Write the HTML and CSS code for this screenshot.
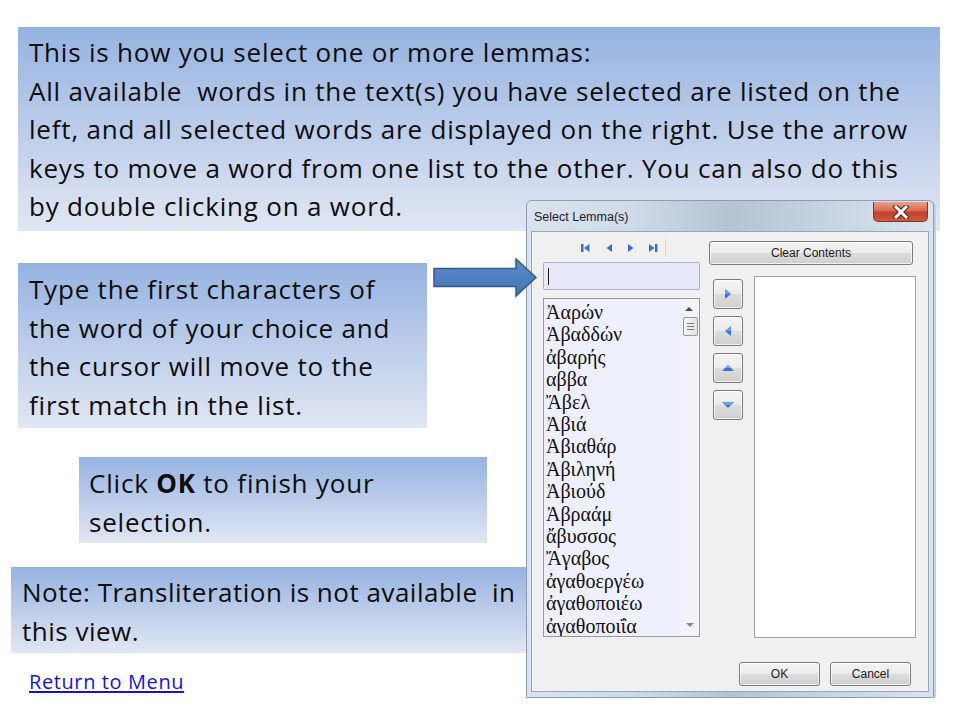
FILE: index.html
```html
<!DOCTYPE html>
<html>
<head>
<meta charset="utf-8">
<title>Select Lemma(s)</title>
<link rel="stylesheet" href="styles.css">
</head>
<body>
<div class="slide">
  <div class="box box-intro">
    This is how you select one or more lemmas:<br>
    All available&nbsp; words in the text(s) you have selected are listed on the<br>
    left, and all selected words are displayed on the right. Use the arrow<br>
    keys to move a word from one list to the other. You can also do this<br>
    by double clicking on a word.
  </div>

  <div class="row-type">
    <div class="box box-type">
      Type the first characters of<br>
      the word of your choice and<br>
      the cursor will move to the<br>
      first match in the list.
    </div>
    <svg class="pointer" width="106" height="42" viewBox="0 0 106 42">
      <defs>
        <linearGradient id="ag" x1="0" y1="0" x2="0" y2="1">
          <stop offset="0" stop-color="#5a8ccb"/>
          <stop offset="1" stop-color="#4474b3"/>
        </linearGradient>
      </defs>
      <path d="M1 10.5 H83 V1 L103 19.5 L83 38 V28.5 H1 Z" fill="url(#ag)" stroke="#36598a" stroke-width="1.5" stroke-linejoin="miter"/>
    </svg>
  </div>

  <div class="box box-ok">
    Click <b>OK</b> to finish your<br>
    selection.
  </div>

  <div class="box box-note">
    Note: Transliteration is not available&nbsp; in<br>
    this view.
  </div>

  <a class="menu-link" href="#">Return to Menu</a>

  <div class="dialog">
    <div class="titlebar">
      <span class="title">Select Lemma(s)</span>
      <div class="close">
        <svg width="20" height="14" viewBox="0 0 20 14">
          <path d="M5 2 L15 12 M15 2 L5 12" stroke="#5a2418" stroke-width="5" stroke-linecap="square"/>
          <path d="M5 2 L15 12 M15 2 L5 12" stroke="#ffffff" stroke-width="3" stroke-linecap="square"/>
        </svg>
      </div>
    </div>
    <div class="panel">
      <div class="panel-main">
        <div class="left-col">
          <div class="navbar">
            <svg width="90" height="20" viewBox="0 0 90 20">
              <g fill="#3c6fd6">
                <rect x="2" y="6" width="2.5" height="8"/>
                <polygon points="10.5,6 5,10 10.5,14"/>
                <polygon points="33,6 27.5,10 33,14"/>
                <polygon points="49,6 54.5,10 49,14"/>
                <polygon points="70,6 75.5,10 70,14"/>
                <rect x="76" y="6" width="2.5" height="8"/>
              </g>
              <line x1="86.5" y1="1" x2="86.5" y2="19" stroke="#d4d4d4" stroke-width="1"/>
            </svg>
          </div>
          <div class="search"><span class="caret"></span></div>
          <div class="listbox">
            <ul class="items">
              <li>Ἀαρών</li>
              <li>Ἀβαδδών</li>
              <li>ἀβαρής</li>
              <li>αββα</li>
              <li>Ἄβελ</li>
              <li>Ἀβιά</li>
              <li>Ἀβιαθάρ</li>
              <li>Ἀβιληνή</li>
              <li>Ἀβιούδ</li>
              <li>Ἀβραάμ</li>
              <li>ἄβυσσος</li>
              <li>Ἄγαβος</li>
              <li>ἀγαθοεργέω</li>
              <li>ἀγαθοποιέω</li>
              <li>ἀγαθοποιΐα</li>
            </ul>
            <div class="scrollbar">
              <svg class="sb-up" width="8" height="5" viewBox="0 0 8 5"><polygon points="0,5 4,1 8,5" fill="#4a4a4a"/></svg>
              <div class="thumb"><span></span><span></span><span></span></div>
              <div class="sb-space"></div>
              <svg class="sb-down" width="8" height="5" viewBox="0 0 8 5"><polygon points="0,0 4,4 8,0" fill="#8a8a8a"/></svg>
            </div>
          </div>
        </div>
        <div class="right-col">
          <div class="btn btn-clear">Clear Contents</div>
          <div class="right-row">
            <div class="move-btns">
              <div class="btn btn-sq">
                <svg width="8" height="10" viewBox="0 0 8 10"><polygon points="1,0 7,5 1,10" fill="#3f72d8"/><polygon points="1,0 7,5 1,5" fill="#6f9cf0"/></svg>
              </div>
              <div class="btn btn-sq">
                <svg width="8" height="10" viewBox="0 0 8 10"><polygon points="7,0 1,5 7,10" fill="#3f72d8"/><polygon points="7,0 1,5 7,5" fill="#6f9cf0"/></svg>
              </div>
              <div class="btn btn-sq">
                <svg width="12" height="7" viewBox="0 0 12 7"><polygon points="0,6 6,0 12,6" fill="#3f72d8"/><polygon points="3,3 6,0 9,3" fill="#7ba6f2"/></svg>
              </div>
              <div class="btn btn-sq">
                <svg width="12" height="7" viewBox="0 0 12 7"><polygon points="0,0 6,6 12,0" fill="#3f72d8"/><polygon points="0,0 12,0 9,3 3,3" fill="#6f9cf0"/></svg>
              </div>
            </div>
            <div class="selected-list"></div>
          </div>
        </div>
      </div>
      <div class="panel-footer">
        <div class="btn btn-foot">OK</div>
        <div class="btn btn-foot">Cancel</div>
      </div>
    </div>
  </div>
</div>
</body>
</html>
```

FILE: styles.css
```css
html, body {
  margin: 0;
  padding: 0;
  background: #ffffff;
}

.slide {
  position: relative;
  width: 960px;
  height: 720px;
  overflow: hidden;
  display: flex;
  flex-direction: column;
  align-items: flex-start;
  font-family: "Open Sans", Lato, sans-serif;
  color: #0d0d0d;
}

.box {
  box-sizing: border-box;
  background: linear-gradient(180deg, #95b3e1 0%, #bccdea 50%, #e1e7f3 100%);
  font-size: 26px;
  letter-spacing: 0.8px;
  line-height: 38.5px;
  padding: 6px 4px 0 11px;
  white-space: nowrap;
}

.box-intro {
  margin: 27px 0 0 18px;
  width: 922px;
  height: 204px;
}

.row-type {
  display: flex;
  align-items: flex-start;
  margin: 27px 0 0 18px;
  gap: 6px;
}

.box-type {
  margin-top: 5px;
  width: 409px;
  height: 165px;
  padding-top: 7px;
}

.pointer {
  position: relative;
  z-index: 3;
  display: block;
}

.box-ok {
  margin: 29px 0 0 79px;
  width: 408px;
  height: 86px;
  padding-top: 7px;
  padding-left: 10px;
}

.box-note {
  margin: 24px 0 0 11px;
  width: 530px;
  height: 86px;
  padding-top: 6px;
  letter-spacing: 0.5px;
}

.menu-link {
  margin: 17px 0 0 29px;
  font-size: 20px;
  letter-spacing: 0.6px;
  line-height: 24px;
  color: #1414d6;
  text-decoration: underline;
  text-underline-offset: 2px;
}

/* ---------- dialog ---------- */
.dialog {
  position: absolute;
  left: 526px;
  top: 200px;
  z-index: 2;
  width: 408px;
  height: 498px;
  box-sizing: border-box;
  padding: 0 4px 5px 4px;
  display: flex;
  flex-direction: column;
  border: 1px solid #8d9cae;
  border-radius: 6px 6px 0 0;
  background: linear-gradient(90deg, #d9e3ef 0%, #cfdbe9 25%, #b5c3d3 50%, #c5d2e1 72%, #dae4ee 100%);
  font-family: "Liberation Sans", Arial, sans-serif;
  font-size: 12px;
  color: #1a1a1a;
  box-shadow: 2px 0 0 #bcd3ec;
}

.titlebar {
  height: 30px;
  display: flex;
  justify-content: space-between;
  align-items: flex-start;
}

.title {
  align-self: center;
  padding-left: 3px;
  padding-top: 2px;
  font-size: 12.5px;
  color: #1c1c1c;
}

.close {
  margin-top: 1px;
  margin-right: 1px;
  width: 55px;
  height: 20px;
  box-sizing: border-box;
  border: 1px solid #7b3a2e;
  border-top: none;
  border-radius: 0 0 5px 5px;
  background: linear-gradient(180deg, #e9a08a 0%, #d86a4e 45%, #c2402a 55%, #cf5a3c 100%);
  display: flex;
  align-items: center;
  justify-content: center;
}

.close svg {
  display: block;
}

.panel {
  flex: 1;
  background: #f0f0f0;
  border: 1px solid #98a6b6;
  display: flex;
  flex-direction: column;
  padding: 6px 0 0 11px;
}

.panel-main {
  display: flex;
  align-items: flex-start;
}

.left-col {
  width: 157px;
  display: flex;
  flex-direction: column;
}

.navbar {
  height: 20px;
  padding-left: 36px;
}

.navbar svg {
  display: block;
}

.search {
  margin-top: 4px;
  height: 28px;
  box-sizing: border-box;
  border: 1px solid #a9b1c6;
  border-radius: 2px;
  background: #e7e9fb;
  position: relative;
}

.caret {
  position: absolute;
  left: 4px;
  top: 5px;
  width: 1px;
  height: 17px;
  background: #1a1a1a;
}

.listbox {
  margin-top: 8px;
  height: 339px;
  box-sizing: border-box;
  border: 1px solid #9a9a9a;
  background: #eef0fd;
  display: flex;
  overflow: hidden;
}

.items {
  list-style: none;
  margin: 0;
  padding: 2px 0 0 2px;
  flex: 1;
  font-family: "Liberation Serif", "DejaVu Serif", serif;
  font-size: 20px;
  line-height: 22.4px;
  color: #111;
  overflow: hidden;
}

.scrollbar {
  width: 18px;
  display: flex;
  flex-direction: column;
  align-items: center;
  background: #f2f3f9;
}

.sb-up {
  margin-top: 7px;
  margin-right: 2px;
}

.thumb {
  margin-top: 6px;
  width: 15px;
  height: 19px;
  box-sizing: border-box;
  border: 1px solid #9a9a9a;
  border-radius: 2px;
  background: linear-gradient(90deg, #f7f7f7, #e3e3e3);
  display: flex;
  flex-direction: column;
  justify-content: center;
  align-items: center;
  gap: 2px;
}

.thumb span {
  width: 7px;
  height: 1px;
  background: #7a7a7a;
}

.sb-space {
  flex: 1;
}

.sb-down {
  margin-bottom: 8px;
}

.right-col {
  margin-left: 9px;
  width: 207px;
  display: flex;
  flex-direction: column;
}

.btn {
  box-sizing: border-box;
  border: 1px solid #7c7c7c;
  border-radius: 3px;
  background: linear-gradient(180deg, #f4f4f4 0%, #ebebeb 48%, #dcdcdc 52%, #cfcfcf 100%);
  box-shadow: inset 0 0 0 1px rgba(255, 255, 255, 0.7);
  display: flex;
  align-items: center;
  justify-content: center;
  color: #1b1b1b;
}

.btn-clear {
  margin-top: 3px;
  width: 204px;
  height: 24px;
}

.right-row {
  margin-top: 11px;
  display: flex;
  align-items: flex-start;
}

.move-btns {
  margin-left: 4px;
  margin-top: 3px;
  display: flex;
  flex-direction: column;
  gap: 7px;
}

.btn-sq {
  width: 30px;
  height: 30px;
}

.btn-sq svg {
  display: block;
}

.selected-list {
  margin-left: 11px;
  width: 162px;
  height: 362px;
  box-sizing: border-box;
  border: 1px solid #a3a3a3;
  background: #ffffff;
}

.panel-footer {
  margin-top: 24px;
  display: flex;
  justify-content: flex-end;
  gap: 10px;
  padding-right: 17px;
}

.btn-foot {
  width: 81px;
  height: 24px;
}
```
